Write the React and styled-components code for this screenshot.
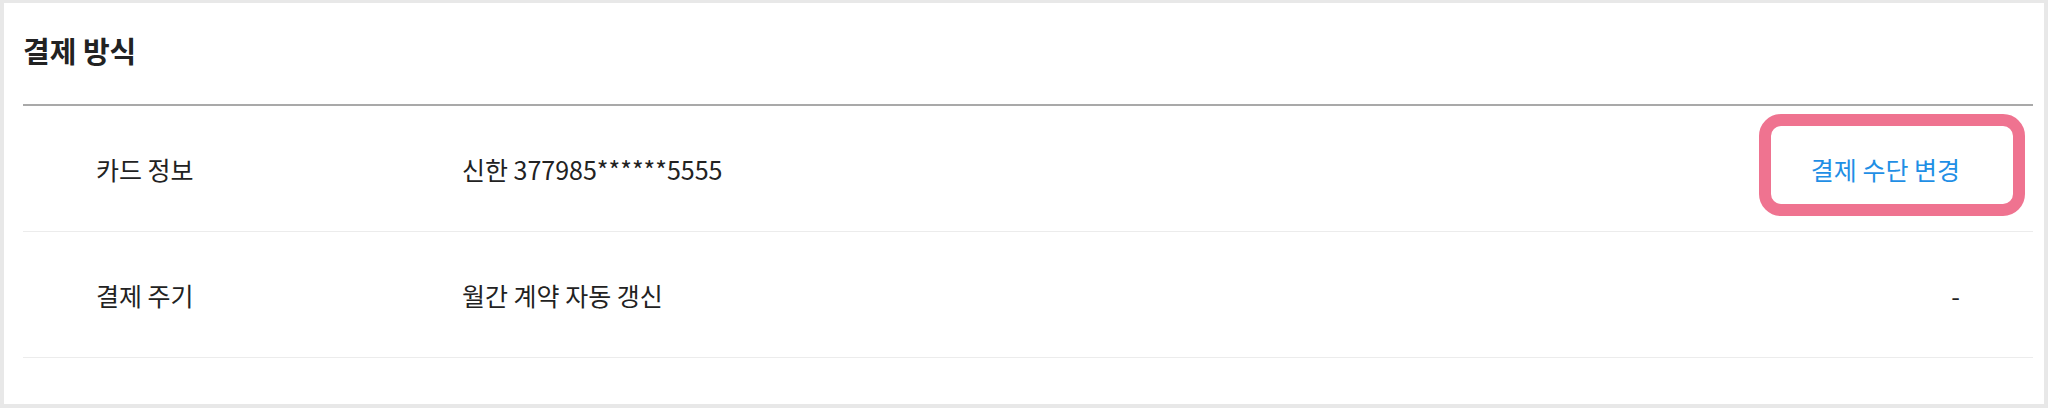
import React from "react";
import styled, { createGlobalStyle } from "styled-components";

const GlobalStyle = createGlobalStyle`
  html, body {
    margin: 0;
    padding: 0;
    background: #fff;
  }
  body {
    font-family: "Noto Sans CJK KR", "Noto Sans", sans-serif;
    color: #222;
  }
`;

const Panel = styled.section`
  box-sizing: border-box;
  width: 2048px;
  height: 408px;
  background: #fff;
  border: 4px solid #e8e8e8;
  border-top-width: 3px;
  padding: 0 11px 0 19px;
`;

const Title = styled.h2`
  margin: 0;
  padding: 29px 0 36px;
  font-size: 29px;
  line-height: 36px;
  font-weight: 700;
  color: #222;
  border-bottom: 2px solid #a9a9a9;
`;

const Row = styled.div`
  display: grid;
  grid-template-columns: 366px 1fr auto;
  align-items: center;
  height: 125px;
  padding: 0 73px;
  border-bottom: 1px solid #ececec;
  font-size: 25px;
  color: #222;
`;

const Label = styled.div`
  white-space: nowrap;
`;

const Value = styled.div`
  white-space: nowrap;
`;

const Action = styled.div`
  display: flex;
  justify-content: flex-end;
`;

const ChangeButton = styled.button`
  position: relative;
  padding: 0;
  border: 0;
  background: none;
  font-family: inherit;
  font-size: 25px;
  line-height: 30px;
  color: #1f8fe5;
  cursor: pointer;

  &::after {
    content: "";
    position: absolute;
    left: -52px;
    right: -65px;
    top: -40px;
    bottom: -32px;
    border: 12px solid #ef7390;
    border-radius: 22px;
    pointer-events: none;
  }
`;

const Dash = styled.span`
  color: #222;
`;

const rows = [
  { label: "카드 정보", value: "신한 377985******5555", action: "button" },
  { label: "결제 주기", value: "월간 계약 자동 갱신", action: "none" },
];

export default function App() {
  return (
    <>
      <GlobalStyle />
      <Panel>
        <Title>결제 방식</Title>
        {rows.map((row) => (
          <Row key={row.label}>
            <Label>{row.label}</Label>
            <Value>{row.value}</Value>
            <Action>
              {row.action === "button" ? (
                <ChangeButton type="button">결제 수단 변경</ChangeButton>
              ) : (
                <Dash>-</Dash>
              )}
            </Action>
          </Row>
        ))}
      </Panel>
    </>
  );
}
